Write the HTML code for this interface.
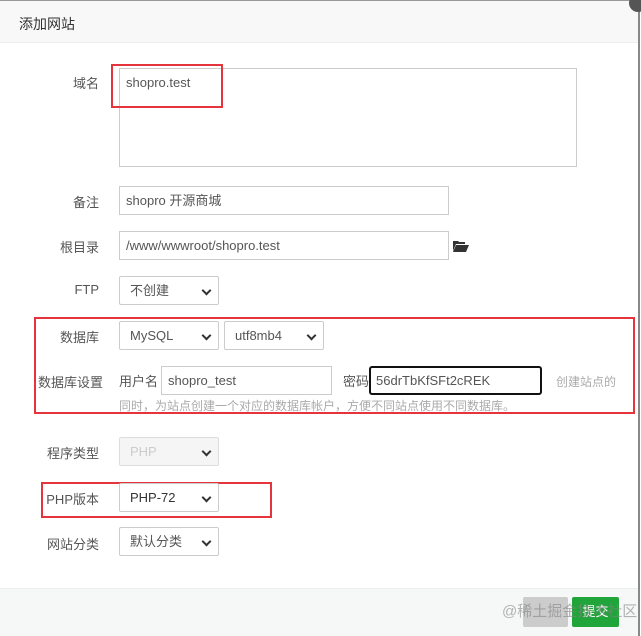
<!DOCTYPE html>
<html><head><meta charset="utf-8"><style>
*{box-sizing:border-box;margin:0;padding:0}
body{width:641px;height:636px;position:relative;background:#fff;font-family:"Liberation Sans","Noto Sans CJK SC",sans-serif;font-size:13px;color:#555;overflow:hidden}
.a{position:absolute}
.hdr{left:0;top:0;width:638px;height:43px;background:#f8f8f8;border-top:1px solid #999;border-bottom:1px solid #eee;padding:13px 0 0 19px;font-size:14px;color:#333}
.lbl{text-align:right;width:100px;left:0}
.inp{border:1px solid #ccc;background:#fff;padding:0 6px;line-height:27px;color:#555}
.sel{border:1px solid #ccc;border-radius:2px;background:#fff;padding:0 10px;line-height:27px;color:#555}
.sel:after{content:"";position:absolute;right:8px;top:10px;width:5px;height:5px;border-right:2px solid #333;border-bottom:2px solid #333;transform:rotate(45deg)}
.red{border:2px solid #e5343c}
</style></head><body>
<div class="a hdr">添加网站</div>
<div class="a" style="left:638px;top:8px;width:2px;height:628px;background:#888"></div>
<div class="a" style="left:629px;top:-6px;width:18px;height:18px;border-radius:50%;background:#555"></div>

<div class="a lbl" style="top:73px;width:99px">域名</div>
<div class="a inp" style="left:119px;top:68px;width:458px;height:99px;line-height:28px">shopro.test</div>
<div class="a red" style="left:111px;top:64px;width:112px;height:44px"></div>

<div class="a lbl" style="top:192px;width:99px">备注</div>
<div class="a inp" style="left:119px;top:186px;width:330px;height:29px">shopro 开源商城</div>

<div class="a lbl" style="top:237px;width:99px">根目录</div>
<div class="a inp" style="left:119px;top:231px;width:330px;height:29px">/www/wwwroot/shopro.test</div>
<svg class="a" style="left:453px;top:240px" width="16" height="12"><path d="M0 1h5l1 1h6v2H3L0 11z M3 5h13l-3 7H0z" fill="#333"/></svg>

<div class="a lbl" style="top:282px;width:99px">FTP</div>
<div class="a sel" style="left:119px;top:276px;width:100px;height:29px">不创建</div>

<div class="a red" style="left:34px;top:317px;width:601px;height:97px"></div>
<div class="a lbl" style="top:327px;width:99px">数据库</div>
<div class="a sel" style="left:119px;top:321px;width:100px;height:29px">MySQL</div>
<div class="a sel" style="left:224px;top:321px;width:100px;height:29px">utf8mb4</div>
<div class="a" style="left:38px;top:372px">数据库设置</div>
<div class="a" style="left:119px;top:371px">用户名</div>
<div class="a inp" style="left:161px;top:366px;width:171px;height:29px">shopro_test</div>
<div class="a" style="left:343px;top:371px">密码</div>
<div class="a inp" style="left:369px;top:366px;width:173px;height:29px;border:2px solid #111;border-radius:3px;padding-left:5px;line-height:25px">56drTbKfSFt2cREK</div>
<div class="a" style="left:556px;top:373px;color:#aaa;font-size:12px">创建站点的</div>
<div class="a" style="left:119px;top:397px;color:#aaa;font-size:12px">同时，为站点创建一个对应的数据库帐户，方便不同站点使用不同数据库。</div>

<div class="a lbl" style="top:443px;width:99px">程序类型</div>
<div class="a sel" style="left:119px;top:437px;width:100px;height:29px;background:#f5f5f5;color:#ccc;border-color:#ddd">PHP</div>

<div class="a red" style="left:41px;top:482px;width:231px;height:36px"></div>
<div class="a lbl" style="top:489px;width:99px">PHP版本</div>
<div class="a sel" style="left:119px;top:483px;width:100px;height:29px;color:#333">PHP-72</div>

<div class="a lbl" style="top:534px;width:99px">网站分类</div>
<div class="a sel" style="left:119px;top:527px;width:100px;height:29px">默认分类</div>

<div class="a" style="left:0;top:588px;width:638px;height:48px;background:#f6f8f8;border-top:1px solid #eee"></div>
<div class="a" style="left:523px;top:597px;width:45px;height:30px;background:#ccc;border-radius:2px"></div>
<div class="a" style="left:572px;top:597px;width:47px;height:30px;background:#20a53a;border-radius:2px;color:#fff;text-align:center;line-height:30px">提交</div>
<div class="a" style="left:502px;top:600px;color:rgba(130,130,130,0.6);font-size:15px">@稀土掘金技术社区</div>
</body></html>
